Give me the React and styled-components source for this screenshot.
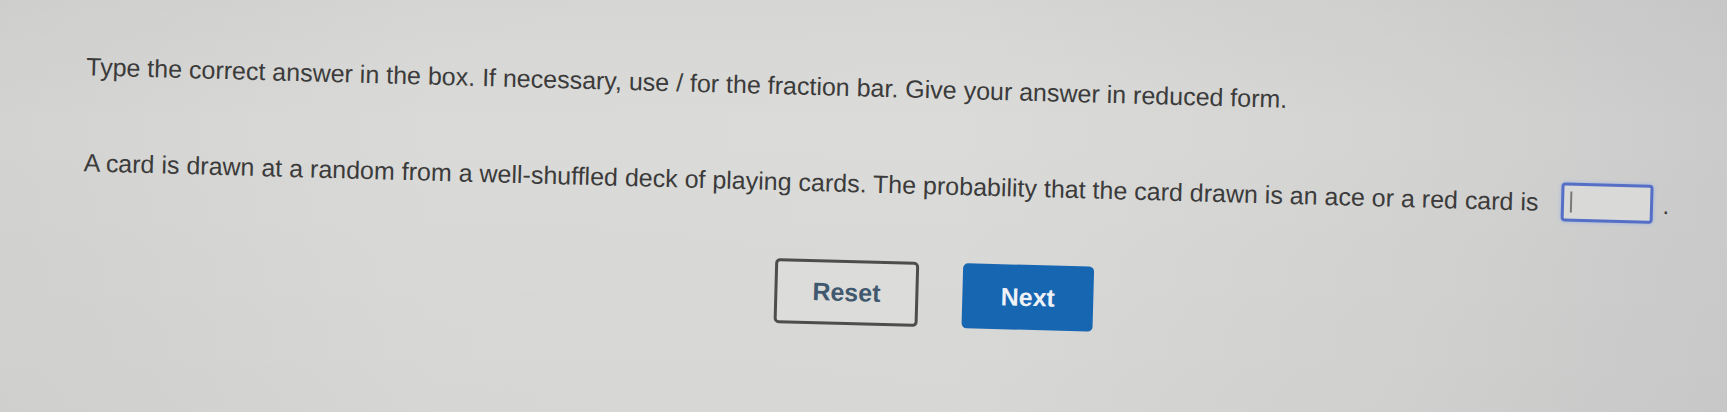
import styled, { createGlobalStyle } from "styled-components";

const GlobalStyle = createGlobalStyle`
  html, body {
    margin: 0;
    padding: 0;
  }
  body {
    width: 1727px;
    height: 412px;
    overflow: hidden;
    font-family: "Liberation Sans", Arial, sans-serif;
    background:
      linear-gradient(180deg, rgba(0, 0, 0, 0.025) 0%, rgba(0, 0, 0, 0) 30%, rgba(0, 0, 0, 0.02) 100%),
      linear-gradient(90deg, #d3d3d1 0%, #dadad8 25%, #dbdbd9 55%, #d4d4d3 80%, #cbcbcb 100%);
    color: #3a3a3a;
  }
`;

// the photo of the screen is tilted a little, so the page is too
const Page = styled.div`
  display: flex;
  flex-direction: column;
  align-items: flex-start;
  padding: 49px 0 0 88px;
  transform: rotate(1.55deg);
  transform-origin: 0 0;
`;

const Instructions = styled.p`
  margin: 0;
  font-size: 25px;
  line-height: 30px;
  color: #3b3b3b;
  white-space: nowrap;
`;

const Question = styled.div`
  margin-top: 61px;
  display: flex;
  align-items: center;
  font-size: 25px;
  line-height: 30px;
  color: #3b3b3b;
  white-space: nowrap;
`;

const AnswerField = styled.span`
  position: relative;
  display: inline-block;
  margin: 0 9px 0 23px;
`;

const AnswerBox = styled.input`
  display: block;
  box-sizing: border-box;
  width: 92px;
  height: 39px;
  border: 3px solid #566fc6;
  border-radius: 4px;
  background: #d9d9d8;
  box-shadow: 0 0 3px 1px rgba(140, 170, 235, 0.45);
  outline: none;
`;

const Caret = styled.span`
  position: absolute;
  left: 9px;
  top: 9px;
  width: 2px;
  height: 21px;
  background: #7a7a78;
`;

const ButtonRow = styled.div`
  display: flex;
  gap: 44px;
  margin: 58px 0 0 694px;
`;

const Button = styled.button`
  box-sizing: border-box;
  height: 65px;
  padding: 0;
  font-family: "Liberation Sans", Arial, sans-serif;
  font-size: 25px;
  font-weight: bold;
  border-radius: 5px;
  cursor: pointer;
  width: ${(p) => (p.$primary ? "131px" : "144px")};
  border: ${(p) => (p.$primary ? "none" : "3px solid #4d4d4d")};
  background: ${(p) => (p.$primary ? "#1766b2" : "#dcdcdb")};
  color: ${(p) => (p.$primary ? "#eef2f6" : "#41596f")};
`;

export default function App() {
  return (
    <>
      <GlobalStyle />
      <Page>
        <Instructions>
          Type the correct answer in the box. If necessary, use / for the fraction bar. Give your
          answer in reduced form.
        </Instructions>
        <Question>
          A card is drawn at a random from a well-shuffled deck of playing cards. The probability
          that the card drawn is an ace or a red card is
          <AnswerField>
            <AnswerBox type="text" aria-label="answer" />
            <Caret />
          </AnswerField>
          .
        </Question>
        <ButtonRow>
          <Button>Reset</Button>
          <Button $primary>Next</Button>
        </ButtonRow>
      </Page>
    </>
  );
}
